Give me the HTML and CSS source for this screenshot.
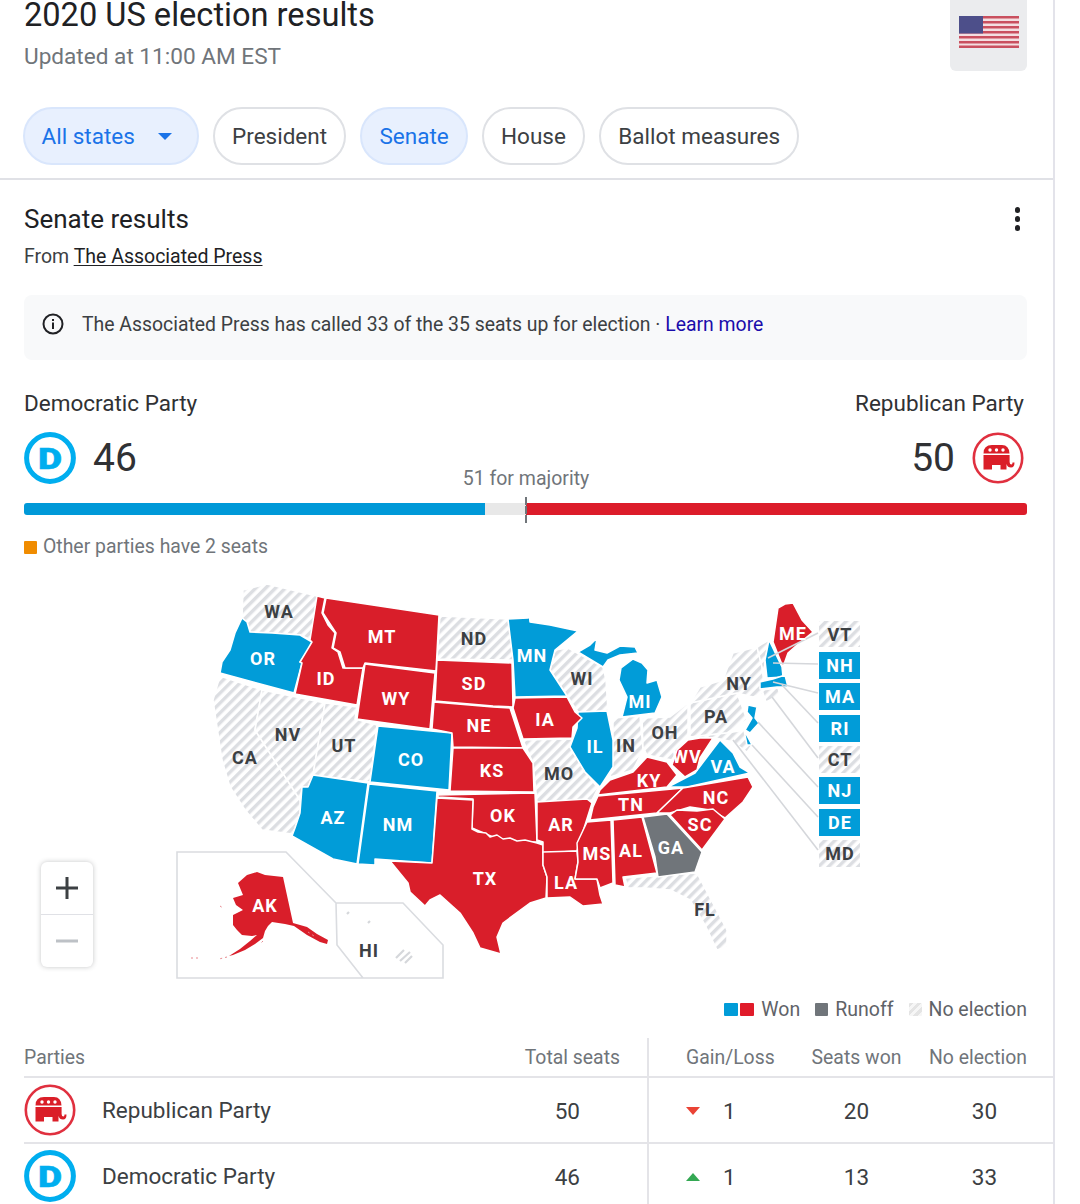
FILE: index.html
```html
<!DOCTYPE html>
<html lang="en">
<head>
<meta charset="utf-8">
<title>2020 US election results</title>
<link rel="stylesheet" href="styles.css">
</head>
<body>
<svg class="defs" width="0" height="0" aria-hidden="true">
  <defs>
    <pattern id="hatch" width="7" height="7" patternUnits="userSpaceOnUse" patternTransform="rotate(45)">
      <rect width="7" height="7" fill="#fff"/>
      <rect width="3.4" height="7" fill="#dcdee2"/>
    </pattern>
    <symbol id="gop" viewBox="0 0 52 52">
      <circle cx="26" cy="26" r="24.2" fill="#fff" stroke="#e0303f" stroke-width="2.6"/>
      <path fill="#da1e28" d="M11.5 21.5 Q11.5 13 20 13 H30 Q37 13 37.5 21.5Z"/>
      <path fill="#da1e28" d="M11.5 23 H37.6 V30 Q37.6 32.5 39.5 32.5 Q40.5 32.5 40.5 30.5 H42.5 Q42.5 35.5 39 35.5 Q35.5 35.5 34.5 32 V37.5 H28.5 V33 H20 V37.5 H11.5Z"/>
      <circle cx="18" cy="18" r="1.7" fill="#fff"/><circle cx="24.5" cy="18" r="1.7" fill="#fff"/><circle cx="31" cy="18" r="1.7" fill="#fff"/>
    </symbol>
    <symbol id="dem" viewBox="0 0 52 52">
      <circle cx="26" cy="26" r="23.4" fill="#fff" stroke="#00aeef" stroke-width="5"/>
      <text transform="translate(26 36.5) scale(1.28 1)" text-anchor="middle" class="dem-d">D</text>
    </symbol>
  </defs>
</svg>
<main class="card">
  <header class="top">
    <div class="headline">
      <div class="titles">
        <h1 class="title">2020 US election results</h1>
        <p class="updated">Updated at 11:00 AM EST</p>
      </div>
      <div class="flag-box">
        <svg class="flag" viewBox="0 0 60 32" width="60" height="32" aria-hidden="true">
          <rect width="60" height="32" fill="#f3dfe1"/>
          <g fill="#c9505f">
            <rect y="0" width="60" height="2.5"/><rect y="5" width="60" height="2.5"/><rect y="10" width="60" height="2.5"/><rect y="15" width="60" height="2.5"/><rect y="20" width="60" height="2.5"/><rect y="25" width="60" height="2.5"/><rect y="29.5" width="60" height="2.5"/>
          </g>
          <rect width="24" height="17.5" fill="#4d4f8a"/>
        </svg>
      </div>
    </div>
    <nav class="chips">
      <span class="chip chip-on chip-menu">All states<i class="caret"></i></span>
      <span class="chip">President</span>
      <span class="chip chip-on">Senate</span>
      <span class="chip">House</span>
      <span class="chip">Ballot measures</span>
    </nav>
  </header>

  <section class="results">
    <div class="results-head">
      <div>
        <h2 class="results-title">Senate results</h2>
        <p class="source">From <a class="source-link">The Associated Press</a></p>
      </div>
      <span class="kebab"><i></i><i></i><i></i></span>
    </div>
    <div class="notice">
      <svg class="info" viewBox="0 0 24 24" width="24" height="24" aria-hidden="true">
        <circle cx="12" cy="12" r="9.5" fill="none" stroke="#202124" stroke-width="2"/>
        <rect x="11" y="10.5" width="2" height="6.5" fill="#202124"/><rect x="11" y="7" width="2" height="2" fill="#202124"/>
      </svg>
      <span>The Associated Press has called 33 of the 35 seats up for election · <a class="learn">Learn more</a></span>
    </div>
    <div class="tally">
      <div class="side">
        <div class="party-name">Democratic Party</div>
        <div class="score"><svg class="logo"><use href="#dem"/></svg><span class="num">46</span></div>
      </div>
      <div class="side side-right">
        <div class="party-name">Republican Party</div>
        <div class="score"><span class="num">50</span><svg class="logo"><use href="#gop"/></svg></div>
      </div>
      <span class="majority">51 for majority</span>
    </div>
    <div class="bar">
      <i class="seg seg-d"></i><i class="seg seg-o"></i><i class="seg seg-r"></i>
      <i class="tick"></i>
    </div>
    <p class="others"><i class="sw sw-o"></i>Other parties have 2 seats</p>
  </section>

  <section class="map">
    <svg class="map-svg" viewBox="0 580 1053 410" width="1053" height="410" role="img" aria-label="US Senate results map">
      <g class="st none">
        <polygon points="243,590 267,584 317,596 311,640 300,635 272,633 250,632 247,622 242,618"/>
        <polygon points="220,676 262,690 255,730 300,800 300,813 295,828 292,834 262,830 245,810 230,787 222,760 213,700"/>
        <polygon points="262,690 325,703 313,775 308,787 302,787 300,800 255,730"/>
        <polygon points="325,703 357,707 355,719 377,725 370,782 313,775"/>
        <polygon points="440,616 508,619 513,660 437,659"/>
        <polygon points="555,650 568,648 603,667 606,680 608,711 578,712 567,696 550,670"/>
        <polygon points="523,740 572,739 570,747 585,772 598,788 592,800 537,802 533,763"/>
        <polygon points="613,718 640,716 643,750 633,770 610,777 613,740"/>
        <polygon points="642,718 670,717 688,703 688,737 677,750 672,760 647,755 643,747"/>
        <polygon points="690,703 737,693 747,720 727,733 690,737"/>
        <polygon points="700,687 723,680 733,653 757,647 762,667 765,693 753,697 737,693 690,703"/>
        <polygon points="757,647 769,640 765,660 764,678 762,667"/>
        <polygon points="762,690 778,688 780,695 766,702"/>
        <polygon points="690,737 727,733 745,730 752,745 747,752 733,742 716,738"/>
        <polygon points="625,878 697,873 727,930 727,947 717,950 705,925 690,900 670,890 645,888 628,888"/>
      </g>
      <g class="st blue">
        <polygon points="242,618 247,622 250,632 272,633 300,635 312,642 307,652 300,662 302,663 294,693 220,673 222,662 230,650 235,633"/>
        <polygon points="378,726 452,733 449,790 370,782"/>
        <polygon points="313,775 368,783 357,864 333,859 292,836 295,828 300,813 302,787 308,787"/>
        <polygon points="369,784 437,791 432,863 389,860 375,859 375,865 358,864"/>
        <polygon points="508,619 528,618 529,613 530,622 550,625 578,631 555,650 550,670 567,696 515,697 513,660"/>
        <polygon points="578,652 590,645 597,638 595,650 607,653 620,646 635,647 638,653 620,655 608,660 603,667"/>
        <polygon points="633,659 642,663 648,670 647,683 657,680 662,697 655,713 622,717 627,697 619,680 621,668"/>
        <polygon points="578,712 607,711 613,740 613,767 600,787 585,772 570,747 577,728"/>
        <polygon points="668,787 695,773 720,740 733,753 740,767 750,773 687,787"/>
        <polygon points="769,640 782,667 783,677 767,678 765,660"/>
        <polygon points="760,682 773,679 785,675 788,687 777,687 760,689"/>
        <polygon points="748,705 757,707 755,718 759,723 750,733 745,730 752,718 747,712"/>
        <polygon points="744,730 752,745 747,745"/>
      </g>
      <g class="st red">
        <polygon points="317,596 325,598 322,613 328,625 335,633 332,648 338,652 343,668 363,668 357,705 295,694 302,663 300,662 312,642 310,640"/>
        <polygon points="326,598 439,615 436,671 365,663 363,668 345,668 340,652 333,648 336,633 323,613"/>
        <polygon points="365,664 435,673 430,729 357,719"/>
        <polygon points="437,660 512,663 513,707 493,706 435,701"/>
        <polygon points="434,702 493,707 510,708 523,748 453,747 452,733 432,729"/>
        <polygon points="453,748 523,748 533,763 534,792 450,791"/>
        <polygon points="438,795 535,793 537,842 513,842 493,837 472,828 473,799 438,797"/>
        <polygon points="437,798 473,800 472,829 478,832 486,833 490,837 497,835 503,839 510,838 517,841 525,840 537,843 543,845 543,865 547,877 546,898 530,903 503,923 497,937 501,954 480,948 473,933 460,913 440,895 430,900 425,906 410,892 408,883 390,861 432,863"/>
        <polygon points="515,698 567,697 575,712 582,718 573,727 572,738 523,739 513,708"/>
        <polygon points="537,802 587,799 592,803 578,847 577,851 543,853 543,842 537,840"/>
        <polygon points="543,852 577,851 578,862 575,879 597,879 600,895 603,904 583,906 570,897 547,898 547,877 543,865"/>
        <polygon points="587,822 611,820 613,883 600,888 597,879 575,879 578,862 577,843"/>
        <polygon points="613,820 642,817 657,873 623,877 625,887 615,885"/>
        <polygon points="598,796 683,788 657,813 590,820 593,807"/>
        <polygon points="600,790 610,780 633,772 647,757 667,762 677,775 667,787 598,795"/>
        <polygon points="688,740 700,738 713,738 700,758 697,770 685,777 672,765 677,750"/>
        <polygon points="657,813 683,788 748,777 753,787 743,802 725,818 710,810 690,807 670,813"/>
        <polygon points="670,815 677,810 697,811 713,809 725,819 702,850"/>
        <polygon points="778,608 785,604 793,603 802,620 813,632 797,645 788,653 783,667 773,642"/>
      </g>
      <polygon class="st-gray" points="643,817 667,814 702,852 695,872 658,877 655,857"/>

      <g class="leaders">
        <line x1="818" y1="633" x2="768" y2="658"/><line x1="818" y1="664" x2="773" y2="663"/>
        <line x1="818" y1="693" x2="773" y2="682"/><line x1="818" y1="723" x2="782" y2="685"/>
        <line x1="818" y1="758" x2="772" y2="697"/><line x1="818" y1="787" x2="758" y2="722"/>
        <line x1="818" y1="817" x2="752" y2="745"/><line x1="818" y1="850" x2="733" y2="740"/>
      </g>
      <rect class="box-none" x="819" y="621" width="41" height="26"/>
      <rect class="box-blue" x="819" y="652" width="41" height="27"/>
      <rect class="box-blue" x="819" y="683" width="41" height="27"/>
      <rect class="box-blue" x="819" y="715" width="41" height="27"/>
      <rect class="box-none" x="819" y="746" width="41" height="27"/>
      <rect class="box-blue" x="819" y="777" width="41" height="27"/>
      <rect class="box-blue" x="819" y="809" width="41" height="27"/>
      <rect class="box-none" x="819" y="840" width="41" height="27"/>

      <polyline class="inset" points="336,903 286,852 177,852 177,978 443,978 443,945 403,903 336,903 337,945 363,978"/>
      <polygon class="ak" points="238,883 247,875 257,872 265,875 283,877 293,923 300,925 307,927 317,934 328,940 327,944 320,942 307,935 294,926 285,924 272,922 268,926 265,931 263,938 255,944 245,950 233,955 229,956 240,949 250,941 257,935 252,936 242,935 237,930 233,925 233,915 243,910 236,905 233,898 243,895"/>
      <path class="ak-isles" d="M220 906l3 2M227 957l-8 2M198 958h-10M263 941l-3 3M308 932l6 4"/>
      <path class="hi" d="M396 958l8-8M400 961l10-9M405 963l7-7M347 914l2-2M368 923l2-2"/>

      <g class="lb lb-d">
        <text x="279" y="618">WA</text><text x="474" y="645">ND</text><text x="288" y="741">NV</text><text x="245" y="764">CA</text><text x="344" y="752">UT</text>
        <text x="582" y="685">WI</text><text x="559" y="780">MO</text><text x="626" y="752">IN</text><text x="665" y="739">OH</text><text x="716" y="723">PA</text>
        <text x="739" y="690">NY</text><text x="705" y="916">FL</text><text x="369" y="957">HI</text>
        <text x="840" y="641">VT</text><text x="840" y="766">CT</text><text x="840" y="860">MD</text>
      </g>
      <g class="lb lb-w">
        <text x="263" y="665">OR</text><text x="326" y="685">ID</text><text x="382" y="643">MT</text><text x="474" y="690">SD</text><text x="396" y="705">WY</text>
        <text x="479" y="732">NE</text><text x="492" y="777">KS</text><text x="411" y="766">CO</text><text x="333" y="824">AZ</text><text x="398" y="831">NM</text>
        <text x="503" y="822">OK</text><text x="485" y="885">TX</text><text x="561" y="831">AR</text><text x="566" y="889">LA</text><text x="597" y="860">MS</text>
        <text x="631" y="857">AL</text><text x="671" y="854">GA</text><text x="700" y="831">SC</text><text x="716" y="804">NC</text><text x="631" y="811">TN</text>
        <text x="649" y="787">KY</text><text x="687" y="763">WV</text><text x="723" y="773">VA</text><text x="595" y="753">IL</text><text x="545" y="726">IA</text>
        <text x="532" y="662">MN</text><text x="640" y="708">MI</text><text x="793" y="640">ME</text><text x="265" y="912">AK</text>
        <text x="840" y="672">NH</text><text x="840" y="703">MA</text><text x="840" y="735">RI</text><text x="840" y="797">NJ</text><text x="840" y="829">DE</text>
      </g>
    </svg>
    <div class="zoom">
      <span class="zoom-btn"><svg viewBox="0 0 24 24" width="24" height="24" aria-hidden="true"><path fill="#3c4043" d="M10.5 1h3v9.5H23v3h-9.5V23h-3v-9.5H1v-3h9.5z"/></svg></span>
      <span class="zoom-btn"><svg viewBox="0 0 24 24" width="24" height="24" aria-hidden="true"><rect x="1" y="10.5" width="22" height="3" fill="#bdc1c6"/></svg></span>
    </div>
  </section>

  <div class="legend">
    <span class="legend-item"><i class="sw sw-big sw-d"></i><i class="sw sw-big sw-r"></i><span class="legend-text">Won</span></span>
    <span class="legend-item"><i class="sw sw-g"></i><span class="legend-text">Runoff</span></span>
    <span class="legend-item"><i class="sw sw-h"></i><span class="legend-text legend-tight">No election</span></span>
  </div>

  <div class="table">
    <div class="row row-head">
      <span class="c-party">Parties</span>
      <span class="c-total">Total seats</span>
      <span class="c-gain">Gain/Loss</span>
      <span class="c-won">Seats won</span>
      <span class="c-none">No election</span>
    </div>
    <div class="row">
      <span class="c-party"><svg class="logo"><use href="#gop"/></svg><span class="row-name">Republican Party</span></span>
      <span class="c-total">50</span>
      <span class="c-gain"><i class="tri tri-down"></i>1</span>
      <span class="c-won">20</span>
      <span class="c-none">30</span>
    </div>
    <div class="row">
      <span class="c-party"><svg class="logo"><use href="#dem"/></svg><span class="row-name">Democratic Party</span></span>
      <span class="c-total">46</span>
      <span class="c-gain"><i class="tri tri-up"></i>1</span>
      <span class="c-won">13</span>
      <span class="c-none">33</span>
    </div>
  </div>
</main>
</body>
</html>
```
FILE: styles.css
```css
* { box-sizing: border-box; }
html, body { margin: 0; height: 1204px; overflow: hidden; background: #fff; }
body { font-family: Roboto, "Liberation Sans", sans-serif; color: #202124; }
.defs { position: absolute; }
h1, h2, p { margin: 0; font-weight: 400; }
a { color: inherit; }
i { display: block; font-style: normal; }

.card { width: 1055px; height: 1204px; border-right: 2px solid #e3e3ea; overflow: hidden; }

.top { border-bottom: 2px solid #e0e1e6; padding: 0 26px 13px 23px; }
.headline { display: flex; justify-content: space-between; align-items: flex-start; height: 107px; padding-left: 1px; }
.title { font-size: 32.6px; line-height: 30px; color: #202124; }
.updated { font-size: 22.6px; line-height: 28px; margin-top: 13px; color: #70757a; }
.flag-box { width: 77px; height: 71px; background: #ebecee; border-radius: 0 0 6px 6px; display: flex; justify-content: center; padding-top: 16px; }
.flag { display: block; }

.chips { display: flex; gap: 14px; }
.chip { height: 58px; border: 2px solid #dfe1e5; border-radius: 29px; padding: 0 17.2px; display: flex; align-items: center; font-size: 22.5px; color: #3c4043; }
.chip-on { background: #e8f0fe; border-color: #d9e6fc; color: #1a73e8; }
.chip-menu { gap: 23px; padding-left: 16.5px; padding-right: 25px; }
.caret { width: 0; height: 0; border: 7px solid transparent; border-top-color: #1a73e8; border-bottom: 0; }

.results { padding: 23px 26px 0 24px; }
.results-head { display: flex; justify-content: space-between; align-items: flex-start; }
.results-title { font-size: 26px; line-height: 32px; color: #202124; }
.source { font-size: 19.5px; line-height: 26px; margin-top: 9px; color: #3c4043; }
.source-link { color: #202124; text-decoration: underline; text-underline-offset: 2px; }
.kebab { display: flex; flex-direction: column; gap: 3.5px; margin: 4px 7px 0 0; }
.kebab i { width: 5.5px; height: 5.5px; border-radius: 50%; background: #202124; }

.notice { margin-top: 25px; height: 65px; border-radius: 8px; background: #f8f9fa; display: flex; align-items: center; gap: 17px; padding: 0 0 7px 17px; font-size: 19.4px; color: #3c4043; }
.info { display: block; }
.learn { color: #1a0dab; }

.tally { position: relative; display: flex; justify-content: space-between; margin-top: 29px; }
.party-name { font-size: 22.5px; line-height: 28px; color: #303134; }
.side-right .party-name { text-align: right; padding-right: 3px; }
.score { display: flex; align-items: center; gap: 17px; margin-top: 15px; }
.side-right .score { justify-content: flex-end; padding-right: 3px; }
.num { font-size: 39px; line-height: 52px; color: #303134; }
.logo { width: 52px; height: 52px; display: block; flex: none; }
.dem-d { font-family: Roboto, sans-serif; font-weight: 900; font-size: 29px; fill: #00aeef; stroke: #00aeef; stroke-width: .5; }
.majority { position: absolute; left: 502px; bottom: -8px; transform: translateX(-50%); white-space: nowrap; font-size: 19.5px; line-height: 26px; color: #70757a; }

.bar { position: relative; display: flex; height: 12px; margin-top: 19px; border-radius: 3px; overflow: visible; }
.seg-d { width: 461px; background: #0099d8; border-radius: 3px 0 0 3px; }
.seg-o { width: 41px; background: #e8e8e8; }
.seg-r { flex: 1; background: #dc1c2a; border-radius: 0 3px 3px 0; }
.tick { position: absolute; left: 501px; top: -6px; width: 2px; height: 26px; background: repeating-linear-gradient(#70757a 0 8px, transparent 8px 9px); }

.others { display: flex; align-items: center; gap: 6px; margin-top: 19px; font-size: 19.4px; line-height: 26px; color: #70757a; }
.sw { width: 13px; height: 13px; border-radius: 1px; flex: none; }
.sw-big { width: 14px; }
.sw-o { background: #f08c00; }
.sw-d { background: #019cd8; }
.sw-r { background: #e01b2a; margin-left: 2px; }
.sw-g { background: #70757a; }
.sw-h { background: repeating-linear-gradient(135deg, #e4e4e4 0 3px, #f6f6f6 3px 6px); }

.map { position: relative; height: 410px; margin-top: 20px; }
.map-svg { display: block; }
.st polygon, .st-gray { stroke: #fff; stroke-width: 1.5; stroke-linejoin: round; }
.none polygon { fill: url(#hatch); }
.blue polygon { fill: #019cd8; }
.red polygon { fill: #d91e2a; }
.st-gray { fill: #70757a; }
.leaders line { stroke: #d5d7db; stroke-width: 1.6; }
.box-none { fill: url(#hatch); }
.box-blue { fill: #019cd8; }
.inset { fill: none; stroke: #dadce0; stroke-width: 1.6; }
.ak { fill: #d91e2a; }
.ak-isles { fill: none; stroke: #e88a90; stroke-width: 1; stroke-dasharray: 2 3; }
.hi { fill: none; stroke: #d5d7db; stroke-width: 2.2; }
.lb text { font-family: Roboto, sans-serif; font-weight: 700; font-size: 18px; letter-spacing: 1px; text-anchor: middle; }
.lb-d text { fill: #3c4043; }
.lb-w text { fill: #fff; }

.zoom { position: absolute; left: 41px; top: 282px; width: 52px; height: 105px; background: #fff; border-radius: 6px; box-shadow: 0 0 5px rgba(60,64,67,.3); display: flex; flex-direction: column; }
.zoom-btn { flex: 1; display: flex; align-items: center; justify-content: center; }
.zoom-btn + .zoom-btn { border-top: 1.5px solid #e0e1e6; }

.legend { display: flex; justify-content: flex-end; align-items: center; gap: 16px; height: 24px; margin: 7px 26px 0 0; font-size: 19.5px; color: #5f6368; }
.legend-item { display: flex; align-items: center; }
.legend-item:first-child { margin-right: -1px; }
.legend-text { margin-left: 7px; }
.legend-tight { margin-left: 6px; }

.table { margin: 17px 0 0 24px; }
.row { display: grid; grid-template-columns: 476px 147px 142px 135px 1fr; height: 66px; align-items: stretch; border-bottom: 2px solid #e4e4e8; font-size: 22.5px; color: #3c4043; }
.row > span { display: flex; align-items: center; padding-top: 2px; }
.row-head { height: 40px; font-size: 19.4px; color: #70757a; }
.row-head > span { padding-top: 0; }
.row > .c-party { gap: 26px; padding-top: 0; }
.c-total { justify-content: flex-end; padding-right: 67px; }
.row-head .c-total { padding-right: 27px; }
.c-gain { border-left: 2px solid #e4e4e8; padding-left: 37px; }
.c-won { justify-content: center; }
.c-none { justify-content: center; padding-right: 8px; }
.row-head .c-none { justify-content: flex-start; padding-left: 5px; padding-right: 0; }
.tri { width: 0; height: 0; border: 7.5px solid transparent; margin-right: 23px; }
.tri-down { border-top: 8px solid #ea4335; border-bottom: 0; }
.tri-up { border-bottom: 8px solid #34a853; border-top: 0; }
```
